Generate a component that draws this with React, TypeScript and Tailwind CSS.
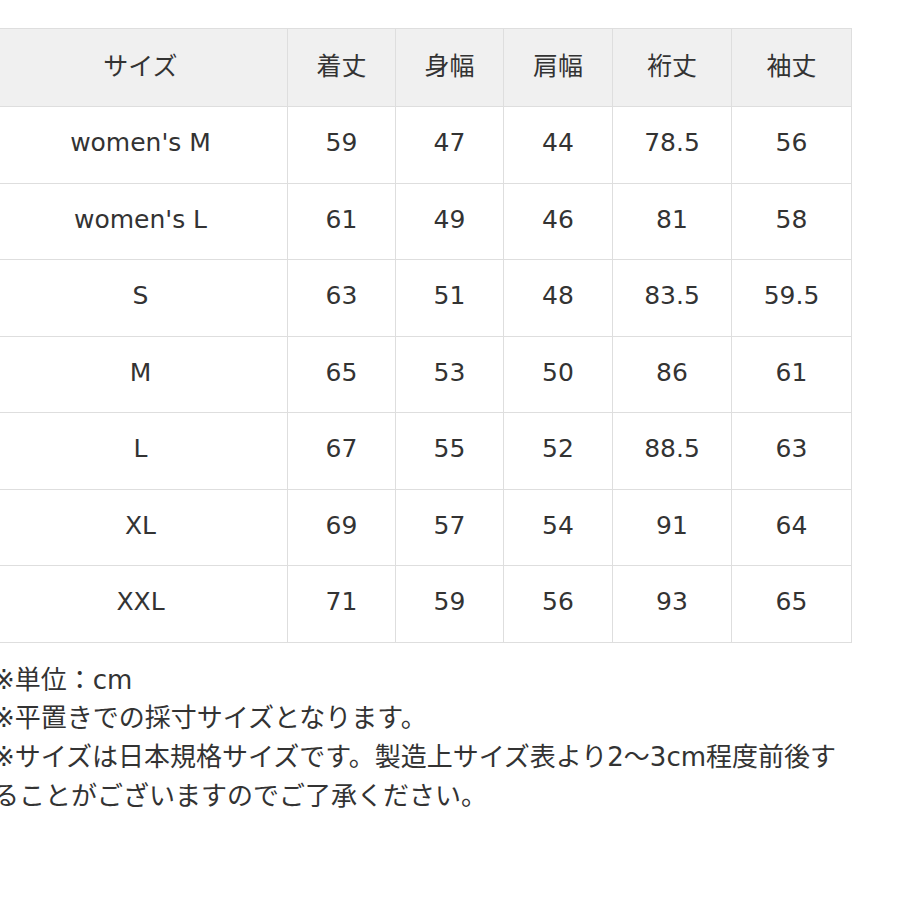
import React from "react";

type Row = [string, string, string, string, string, string];

const header: Row = ["サイズ", "着丈", "身幅", "肩幅", "裄丈", "袖丈"];

const rows: Row[] = [
  ["women's M", "59", "47", "44", "78.5", "56"],
  ["women's L", "61", "49", "46", "81", "58"],
  ["S", "63", "51", "48", "83.5", "59.5"],
  ["M", "65", "53", "50", "86", "61"],
  ["L", "67", "55", "52", "88.5", "63"],
  ["XL", "69", "57", "54", "91", "64"],
  ["XXL", "71", "59", "56", "93", "65"],
];

const widths = ["w-[294px]", "w-[108px]", "w-[108px]", "w-[109px]", "w-[119px]", "w-[120px]"];

const notes = [
  "※単位：cm",
  "※平置きでの採寸サイズとなります。",
  "※サイズは日本規格サイズです。製造上サイズ表より2〜3cm程度前後す",
  "ることがございますのでご了承ください。",
];

export default function App() {
  return (
    <div
      className="min-h-[900px] w-[900px] overflow-hidden bg-white text-[#333]"
      style={{ fontFamily: '"DejaVu Sans", "Noto Sans CJK JP", sans-serif' }}
    >
      <div className="ml-[-7px] pt-[28px]">
        <table className="table-fixed border-collapse text-[25px]">
          <colgroup>
            {widths.map((w, i) => (
              <col key={i} className={w} />
            ))}
          </colgroup>
          <thead>
            <tr className="h-[78px] bg-[#f0f0f0]">
              {header.map((h, i) => (
                <th
                  key={i}
                  className="border border-[#dedede] pb-[5px] text-center font-normal"
                  style={{ fontFamily: '"Noto Sans CJK JP", sans-serif' }}
                >
                  {h}
                </th>
              ))}
            </tr>
          </thead>
          <tbody>
            {rows.map((r, ri) => (
              <tr key={ri} className="h-[76.5px]">
                {r.map((c, ci) => (
                  <td key={ci} className="border border-[#dedede] pb-[4px] text-center">
                    {c}
                  </td>
                ))}
              </tr>
            ))}
          </tbody>
        </table>
        <div className="mt-[18px] text-[26px] leading-[38.7px] whitespace-nowrap">
          {notes.map((n, i) => (
            <div key={i}>{n}</div>
          ))}
        </div>
      </div>
    </div>
  );
}
